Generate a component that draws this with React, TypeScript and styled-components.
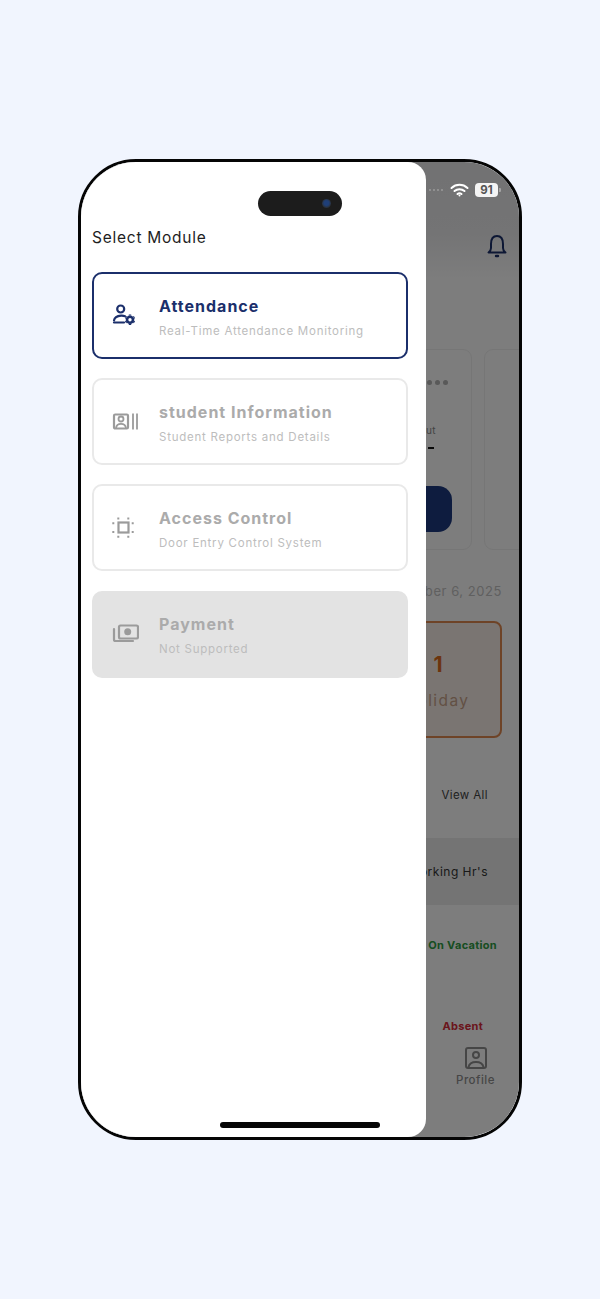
import React from 'react'
import styled, { createGlobalStyle } from 'styled-components'

const GlobalStyle = createGlobalStyle`
  html, body { margin: 0; padding: 0; background: #f1f5fe; }
  body { font-family: Inter, "Noto Sans", sans-serif; }
`

const Page = styled.div`
  width: 600px;
  height: 1299px;
  display: flex;
  justify-content: center;
  padding-top: 159px;
  box-sizing: border-box;
  background: #f1f5fe;
`

const Phone = styled.div`
  position: relative;
  width: 444px;
  height: 981px;
  box-sizing: border-box;
  border: 3px solid #050505;
  border-radius: 58px;
  overflow: hidden;
  background: #fff;
`

const Screen = styled.div`
  height: 100%;
  display: flex;
  flex-direction: column;
  align-items: stretch;
  background: linear-gradient(#e8e8ea 0, #ececee 70px, #ffffff 118px);
`

const BellRow = styled.div`
  display: flex;
  justify-content: flex-end;
  padding: 72px 12px 0 0;
  color: #1b2f6b;
  height: 26px;
`

const CardRow = styled.div`
  display: flex;
  justify-content: flex-end;
  gap: 12px;
  margin-top: 89px;
  margin-right: -15px;
`

const ShiftCard = styled.div`
  width: 150px;
  height: 201px;
  box-sizing: border-box;
  border: 1.5px solid #f0f0f0;
  border-radius: 9px;
  padding: 30px 23px 0 0;
  display: flex;
  flex-direction: column;
  align-items: flex-end;
  flex: none;
`

const PeekCard = styled(ShiftCard)`
  width: 50px;
`

const Dots = styled.div`
  display: flex;
  gap: 3px;
  i { width: 5px; height: 5px; border-radius: 50%; background: #b5b5b5; display: block; }
`

const ShiftLabel = styled.div`
  font-size: 10px;
  letter-spacing: 0.4px;
  color: #8a8a8a;
  margin: 39px 12px 0 0;
`

const ShiftValue = styled.div`
  width: 6px;
  height: 2px;
  background: #111;
  margin: 11px 14px 0 0;
`

const ActionButton = styled.div`
  width: 100px;
  height: 46px;
  border-radius: 14px;
  background: #1d3a80;
  margin: 37px -4px 0 0;
`

const DateText = styled.div`
  font-size: 13px;
  letter-spacing: 0.55px;
  color: #c4c4c4;
  text-align: right;
  margin: 33px 17px 0 0;
`

const HolidayCard = styled.div`
  align-self: flex-end;
  width: 130px;
  height: 117px;
  box-sizing: border-box;
  margin: 22px 17px 0 0;
  border: 2px solid #e08a50;
  border-radius: 8px;
  background: #f9efe8;
  display: flex;
  flex-direction: column;
  align-items: center;
  padding-top: 29px;
`

const HolidayCount = styled.div`
  font-size: 21px;
  font-weight: 700;
  color: #dc6a1c;
  line-height: 26px;
  margin-left: 2px;
`

const HolidayLabel = styled.div`
  font-size: 15.5px;
  letter-spacing: 1.4px;
  color: #c9a48c;
  margin-top: 14px;
  line-height: 18px;
`

const ViewAll = styled.div`
  font-size: 11.5px;
  letter-spacing: 0.4px;
  color: #444;
  text-align: right;
  margin: 49px 31px 0 0;
  line-height: 16px;
`

const TableHead = styled.div`
  height: 67px;
  margin-top: 35px;
  display: flex;
  align-items: center;
  justify-content: flex-end;
  padding-right: 31px;
  background: #ededed;
  font-size: 12px;
  letter-spacing: 0.5px;
  color: #333;
`

const Status = styled.div<{ $color: string; $right: number; $top: number }>`
  font-size: 11px;
  font-weight: 700;
  letter-spacing: 0.3px;
  text-align: right;
  line-height: 14px;
  color: ${p => p.$color};
  margin: ${p => p.$top}px ${p => p.$right}px 0 0;
`

const NavItem = styled.div`
  align-self: flex-end;
  display: flex;
  flex-direction: column;
  align-items: center;
  gap: 4px;
  margin: 14px 24px 0 0;
  font-size: 11.5px;
  font-weight: 500;
  letter-spacing: 0.5px;
  color: #8f8f8f;
`

const Dim = styled.div`
  position: absolute;
  inset: 0;
  background: rgba(0, 0, 0, 0.51);
`

const StatusIcons = styled.div`
  position: absolute;
  top: 21px;
  right: 21px;
  display: flex;
  align-items: center;
  gap: 6px;
`

const SignalDots = styled.div`
  display: flex;
  gap: 2px;
  margin-right: 1px;
  i { width: 2px; height: 2px; border-radius: 50%; background: #9a9a9a; display: block; }
`

const Battery = styled.div`
  position: relative;
  width: 23px;
  height: 14px;
  border-radius: 4px;
  background: #f4f4f4;
  color: #555;
  font-size: 11.5px;
  font-weight: 700;
  line-height: 14px;
  text-align: center;
  &::after {
    content: '';
    position: absolute;
    right: -3px;
    top: 5px;
    width: 2px;
    height: 4px;
    border-radius: 0 1px 1px 0;
    background: #a5a5a5;
  }
`

const Drawer = styled.div`
  position: absolute;
  left: 0;
  top: 0;
  bottom: 0;
  width: 345px;
  box-sizing: border-box;
  padding: 66px 18px 0 11px;
  background: #fff;
  border-radius: 0 18px 18px 0;
`

const Island = styled.div`
  position: absolute;
  top: 29px;
  left: 177px;
  width: 84px;
  height: 25px;
  border-radius: 13px;
  background: #1c1c1c;
`

const Camera = styled.div`
  position: absolute;
  top: 8px;
  right: 11px;
  width: 9px;
  height: 9px;
  border-radius: 50%;
  background: radial-gradient(circle at 50% 45%, #1f3f78 0 35%, #2a3038 70%, #3a3a30 100%);
`

const HomeBar = styled.div`
  position: absolute;
  left: 139px;
  bottom: 9px;
  width: 160px;
  height: 6px;
  border-radius: 3px;
  background: #050505;
`

const Heading = styled.div`
  font-size: 15.5px;
  letter-spacing: 0.75px;
  line-height: 20px;
  color: #1e1e1e;
  margin-bottom: 24px;
`

const ModuleList = styled.div`
  display: flex;
  flex-direction: column;
  gap: 19.2px;
`

const ModuleCard = styled.div<{ $active?: boolean; $disabled?: boolean }>`
  height: 87px;
  box-sizing: border-box;
  display: flex;
  align-items: center;
  gap: 20px;
  padding-left: 18px;
  border-radius: 10px;
  border: 2px solid ${p => (p.$active ? '#1b2f6b' : p.$disabled ? '#e3e3e3' : '#e9e9e9')};
  background: ${p => (p.$disabled ? '#e3e3e3' : '#fff')};
  color: ${p => (p.$active ? '#1b2f6b' : '#9b9b9b')};
`

const ModuleIcon = styled.svg`
  width: 27px;
  height: 27px;
  flex: none;
`

const ModuleText = styled.div`
  display: flex;
  flex-direction: column;
  gap: 7px;
  padding-top: 3px;
`

const ModuleTitle = styled.div<{ $active?: boolean }>`
  font-size: 16px;
  font-weight: 700;
  letter-spacing: 1px;
  line-height: 20px;
  color: ${p => (p.$active ? '#1b2f6b' : '#ababab')};
`

const ModuleSub = styled.div`
  font-size: 11.5px;
  letter-spacing: 0.75px;
  line-height: 16px;
  color: #bdbdbd;
`

const PersonGear = () => (
  <ModuleIcon viewBox="0 0 27 27" fill="none" stroke="currentColor" strokeWidth="2.2" strokeLinecap="round">
    <circle cx="8.700" cy="7" r="3.500" />
    <path d="M13 14.200c-1.300-.5-2.500-.6-4-.5C5 14 2.500 15.500 2 18.500" />
    <path d="M2 20.500h10" />
    <circle cx="18" cy="17.700" r="3" strokeWidth="2.600" />
    <path d="M18 12.500v1M18 22v1M13.500 15.100l.9.500M21.600 19.800l.9.500M13.500 20.300l.9-.500M21.600 15.600l.9-.500" strokeWidth="2.400" strokeLinecap="butt" />
  </ModuleIcon>
)

const ContactBars = () => (
  <ModuleIcon viewBox="0 0 27 27" fill="none" stroke="currentColor" strokeWidth="2.2">
    <rect x="2" y="6.500" width="14" height="14" rx="1.200" />
    <circle cx="9" cy="11" r="2.500" strokeWidth="1.800" />
    <path d="M4 20c.4-2.800 2.400-4.200 5-4.200s4.600 1.400 5 4.200" strokeWidth="1.800" />
    <path d="M21 5.500v16M25 5.500v16" strokeWidth="1.800" />
  </ModuleIcon>
)

const ScanSquare = () => (
  <ModuleIcon viewBox="0 0 27 27" fill="none" stroke="currentColor">
    <rect x="6.500" y="8.500" width="10" height="10" strokeWidth="2.200" />
    <path d="M6.300 3.500v2M16.300 3.500v2M6.300 21.700v2M16.300 21.700v2M.300 9.300h2M.300 18h2M19.700 9.300h2M19.700 18h2" strokeWidth="2" />
  </ModuleIcon>
)

const MoneyStack = () => (
  <ModuleIcon viewBox="0 0 27 27" fill="none" stroke="currentColor" strokeWidth="2.200" strokeLinecap="round">
    <rect x="7" y="4.500" width="19" height="13" rx="1.500" />
    <circle cx="15.700" cy="10.800" r="3.500" fill="currentColor" stroke="none" />
    <path d="M2 8v10.500a1.500 1.500 0 0 0 1.500 1.500H21" />
  </ModuleIcon>
)

const Wifi = () => (
  <svg width="19" height="14" viewBox="0 0 19 14" fill="none" stroke="#fff" strokeLinecap="round">
    <path d="M1.500 5C6 .8 13 .8 17.500 5" strokeWidth="2" />
    <path d="M4.500 8c2.800-2.500 7.200-2.500 10 0" strokeWidth="2" />
    <path d="M7.500 11c1.200-1 2.800-1 4 0" strokeWidth="2" />
    <circle cx="9.500" cy="12.500" r="1" fill="#fff" stroke="none" />
  </svg>
)

const Bell = () => (
  <svg width="20" height="24" viewBox="0 0 20 24" fill="none" stroke="currentColor" strokeWidth="2" strokeLinecap="round" strokeLinejoin="round">
    <path d="M10 2C5.500 2 4 6 4 10v4c0 2-1 3.500-2.500 4.500h17C17 17.500 16 16 16 14v-4c0-4-1.500-8-6-8z" />
    <path d="M9 22h2" strokeWidth="2.400" />
  </svg>
)

const ProfileIcon = () => (
  <svg width="22" height="22" viewBox="0 0 22 22" fill="none" stroke="#8f8f8f" strokeWidth="2">
    <rect x="1" y="1" width="20" height="20" rx="2" />
    <circle cx="11" cy="8" r="3" />
    <path d="M3.500 20c.8-3.500 3.500-5 7.500-5s6.700 1.500 7.500 5" />
  </svg>
)

const modules = [
  { title: 'Attendance', sub: 'Real-Time Attendance Monitoring', Icon: PersonGear, active: true },
  { title: 'student Information', sub: 'Student Reports and Details', Icon: ContactBars },
  { title: 'Access Control', sub: 'Door Entry Control System', Icon: ScanSquare },
  { title: 'Payment', sub: 'Not Supported', Icon: MoneyStack, disabled: true },
]

const App = () => {
  return (
    <Page>
      <GlobalStyle />
      <Phone>
        <Screen>
          <BellRow><Bell /></BellRow>
          <CardRow>
            <ShiftCard>
              <Dots><i /><i /><i /></Dots>
              <ShiftLabel>Check out</ShiftLabel>
              <ShiftValue />
              <ActionButton />
            </ShiftCard>
            <PeekCard />
          </CardRow>
          <DateText>November 6, 2025</DateText>
          <HolidayCard>
            <HolidayCount>1</HolidayCount>
            <HolidayLabel>Holiday</HolidayLabel>
          </HolidayCard>
          <ViewAll>View All</ViewAll>
          <TableHead>Working Hr's</TableHead>
          <Status $color="#2f9e44" $right={22} $top={33}>On Vacation</Status>
          <Status $color="#d92b3a" $right={36} $top={67}>Absent</Status>
          <NavItem>
            <ProfileIcon />
            Profile
          </NavItem>
        </Screen>
        <Dim />
        <StatusIcons>
          <SignalDots><i /><i /><i /><i /></SignalDots>
          <Wifi />
          <Battery>91</Battery>
        </StatusIcons>
        <Drawer>
          <Heading>Select Module</Heading>
          <ModuleList>
            {modules.map(({ title, sub, Icon, active, disabled }) => (
              <ModuleCard key={title} $active={active} $disabled={disabled}>
                <Icon />
                <ModuleText>
                  <ModuleTitle $active={active}>{title}</ModuleTitle>
                  <ModuleSub>{sub}</ModuleSub>
                </ModuleText>
              </ModuleCard>
            ))}
          </ModuleList>
        </Drawer>
        <Island><Camera /></Island>
        <HomeBar />
      </Phone>
    </Page>
  )
}

export default App
